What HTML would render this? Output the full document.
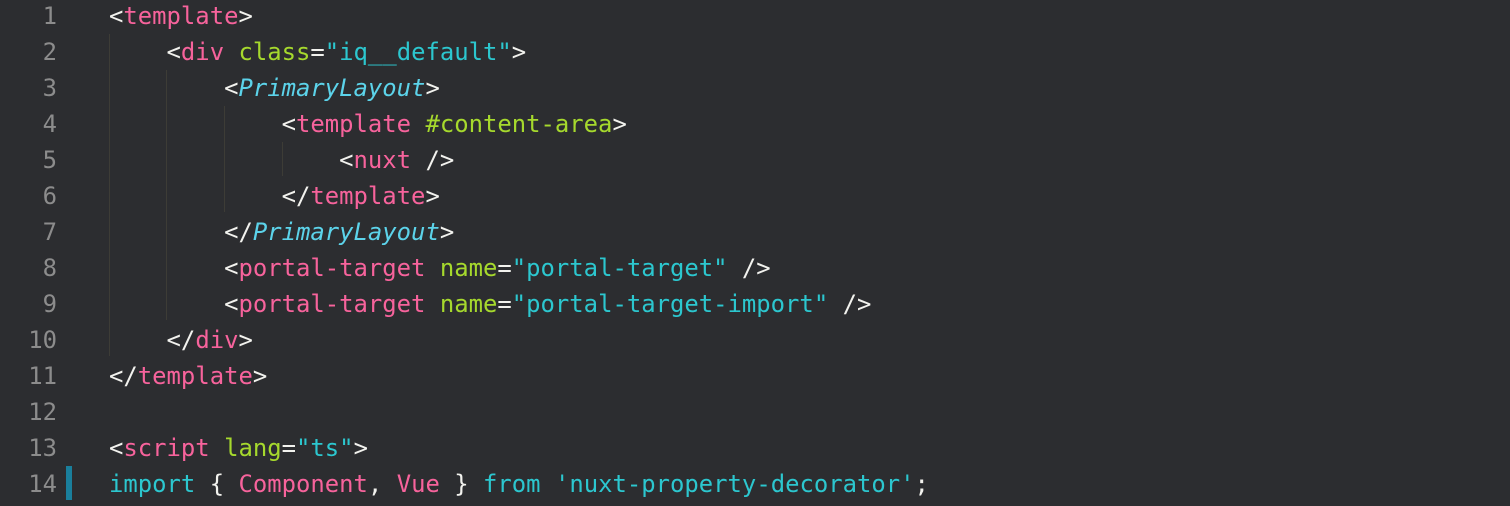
<!DOCTYPE html><html><head><style>
body{margin:0;width:1510px;height:506px;background:#2c2d30;overflow:hidden;font-family:"DejaVu Sans Mono","Liberation Mono",monospace;font-size:23.9px;}
.l{position:absolute;left:0;height:36px;line-height:36px;white-space:pre;}
.n{position:absolute;left:0;width:57px;text-align:right;color:#8c8c8c;}
.c{position:absolute;left:109px;color:#f2f2ee;}
.p{color:#f7639c}.g{color:#a6d92d}.t{color:#2cc7cf}.i{color:#5cd3ea;font-style:italic}
.gd{position:absolute;width:1px;background:#3d3c36;}
</style></head><body>
<div class="gd" style="left:109px;top:34px;height:322px"></div>
<div class="gd" style="left:166px;top:70px;height:250px"></div>
<div class="gd" style="left:224px;top:106px;height:106px"></div>
<div class="gd" style="left:282px;top:142px;height:34px"></div>
<div style="position:absolute;left:66px;top:466px;width:6px;height:34px;background:#1a7f9c"></div>
<div style="position:absolute;left:0;top:-2px;width:1510px;height:508px">
<div class="l" style="top:0px"><span class="n">1</span><span class="c">&lt;<span class="p">template</span>&gt;</span></div>
<div class="l" style="top:36px"><span class="n">2</span><span class="c">    &lt;<span class="p">div</span> <span class="g">class</span>=<span class="t">"iq__default"</span>&gt;</span></div>
<div class="l" style="top:72px"><span class="n">3</span><span class="c">        &lt;<span class="i">PrimaryLayout</span>&gt;</span></div>
<div class="l" style="top:108px"><span class="n">4</span><span class="c">            &lt;<span class="p">template</span> <span class="g">#content-area</span>&gt;</span></div>
<div class="l" style="top:144px"><span class="n">5</span><span class="c">                &lt;<span class="p">nuxt</span> /&gt;</span></div>
<div class="l" style="top:180px"><span class="n">6</span><span class="c">            &lt;/<span class="p">template</span>&gt;</span></div>
<div class="l" style="top:216px"><span class="n">7</span><span class="c">        &lt;/<span class="i">PrimaryLayout</span>&gt;</span></div>
<div class="l" style="top:252px"><span class="n">8</span><span class="c">        &lt;<span class="p">portal-target</span> <span class="g">name</span>=<span class="t">"portal-target"</span> /&gt;</span></div>
<div class="l" style="top:288px"><span class="n">9</span><span class="c">        &lt;<span class="p">portal-target</span> <span class="g">name</span>=<span class="t">"portal-target-import"</span> /&gt;</span></div>
<div class="l" style="top:324px"><span class="n">10</span><span class="c">    &lt;/<span class="p">div</span>&gt;</span></div>
<div class="l" style="top:360px"><span class="n">11</span><span class="c">&lt;/<span class="p">template</span>&gt;</span></div>
<div class="l" style="top:396px"><span class="n">12</span></div>
<div class="l" style="top:432px"><span class="n">13</span><span class="c">&lt;<span class="p">script</span> <span class="g">lang</span>=<span class="t">"ts"</span>&gt;</span></div>
<div class="l" style="top:468px"><span class="n">14</span><span class="c"><span class="t">import</span> { <span class="p">Component</span>, <span class="p">Vue</span> } <span class="t">from</span> <span class="t">'nuxt-property-decorator'</span>;</span></div>
</div>
</body></html>
